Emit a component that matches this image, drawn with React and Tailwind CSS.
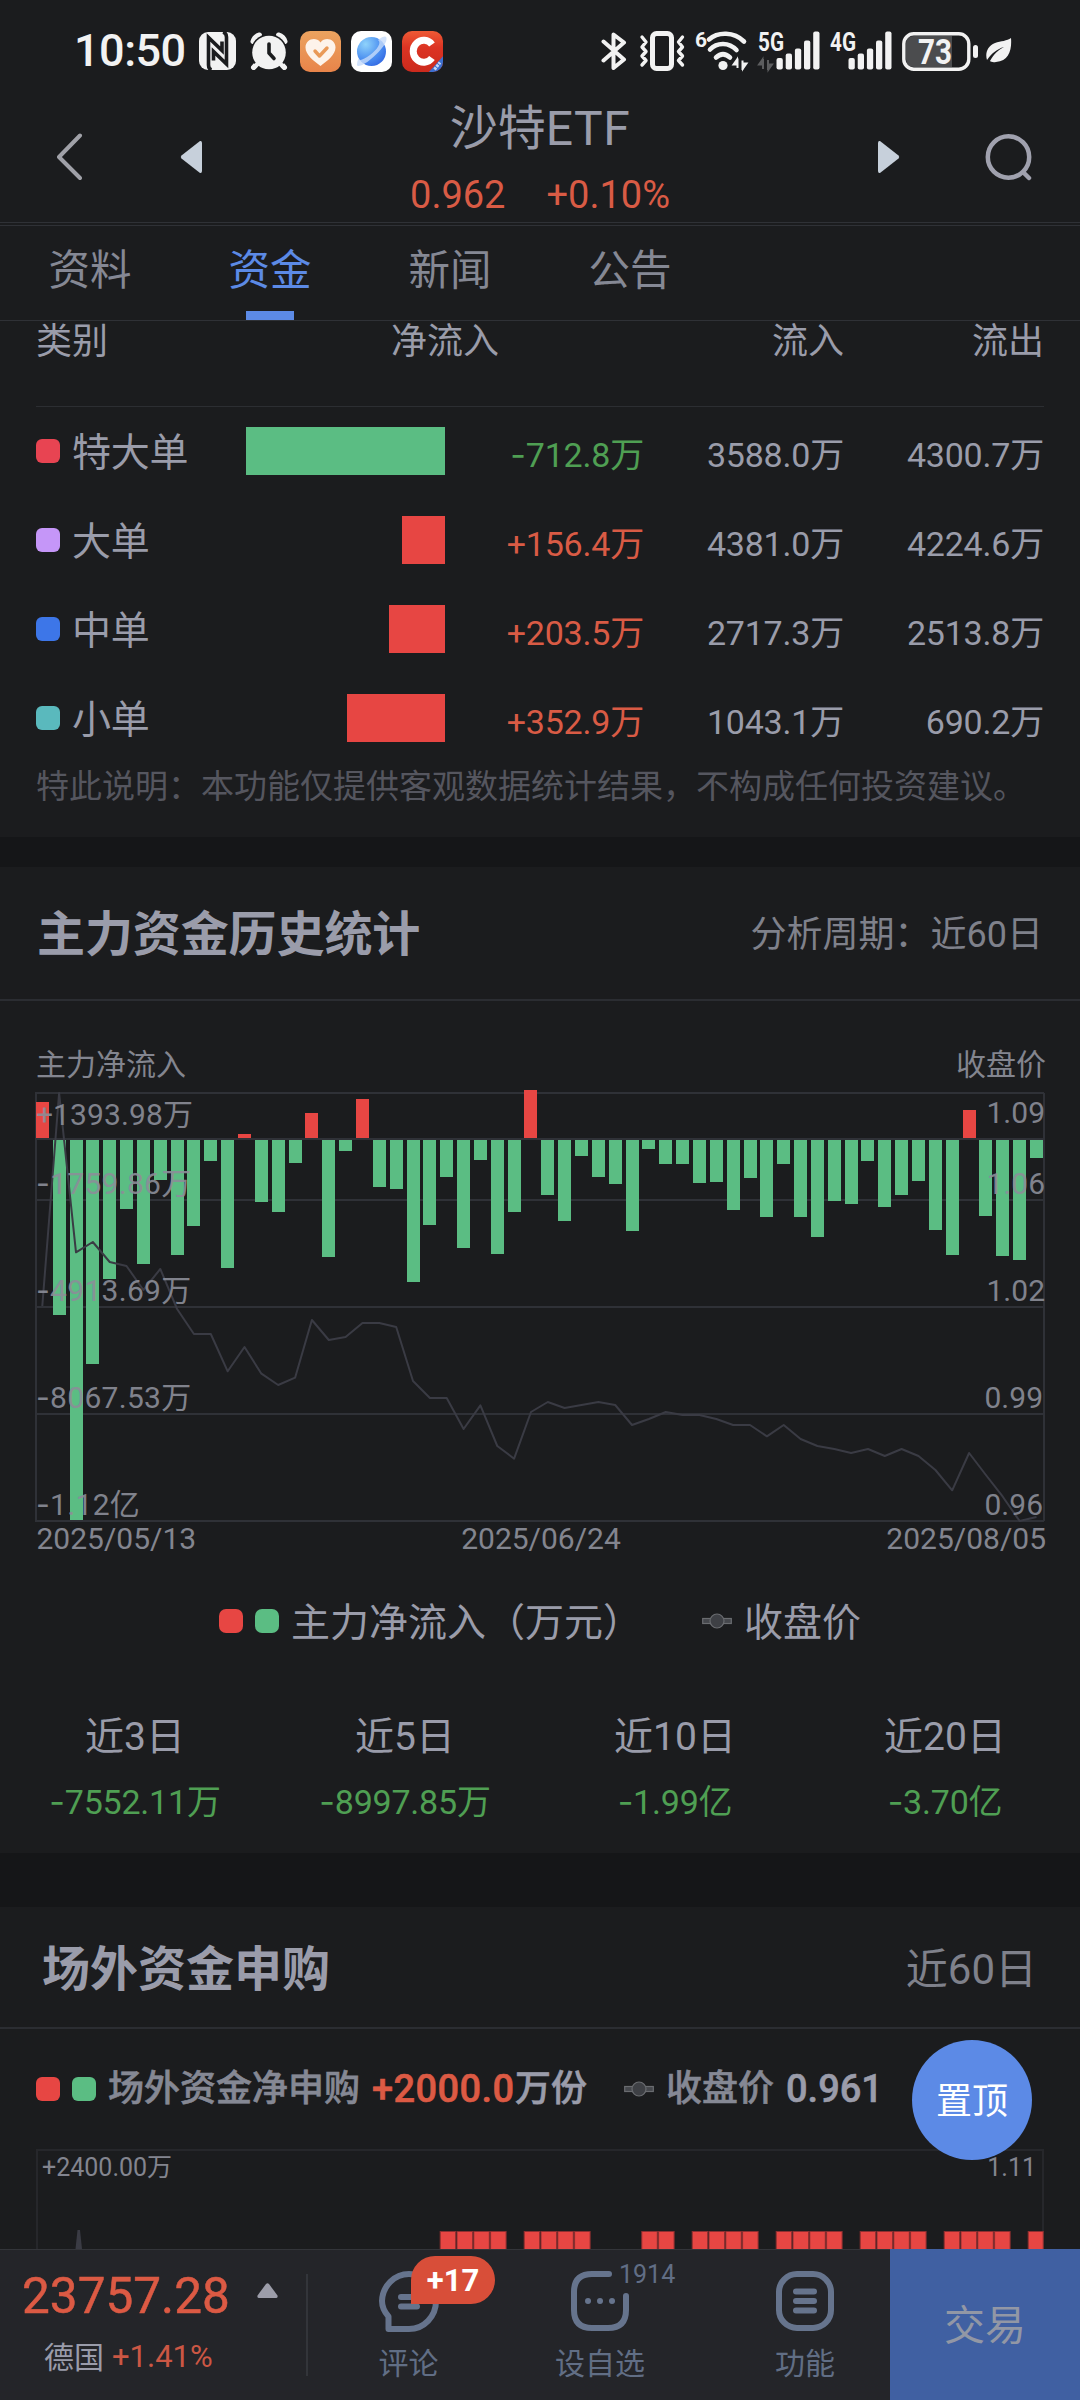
import React from "react";

const FLOWS = [
  { name: "特大单", dot: "bg-[#e84452]", bar: "bg-[#5bbd83] w-[199px]", tone: "text-[#4f9f53]", net: "-712.8万", inflow: "3588.0万", out: "4300.7万" },
  { name: "大单", dot: "bg-[#c596f8]", bar: "bg-[#e74643] w-[43px]", tone: "text-[#d95b45]", net: "+156.4万", inflow: "4381.0万", out: "4224.6万" },
  { name: "中单", dot: "bg-[#3d76e8]", bar: "bg-[#e74643] w-[56px]", tone: "text-[#d95b45]", net: "+203.5万", inflow: "2717.3万", out: "2513.8万" },
  { name: "小单", dot: "bg-[#5ab9bd]", bar: "bg-[#e74643] w-[98px]", tone: "text-[#d95b45]", net: "+352.9万", inflow: "1043.1万", out: "690.2万" },
];

const STATS = [
  ["近3日", "-7552.11万"],
  ["近5日", "-8997.85万"],
  ["近10日", "-1.99亿"],
  ["近20日", "-3.70亿"],
];

// Daily net inflow as bar lengths in pixels: positive rises above the zero line.
const BARS = [
  36, -175, -380, -224, -139, -69, -124, -40, -115, -86, -21, -128, 4, -62, -72, -23, 25, -117, -11, 39,
  -47, -49, -142, -85, -37, -108, -20, -114, -72, 48, -55, -81, -16, -37, -44, -91, -9, -24, -24, -43,
  -42, -70, -38, -77, -24, -77, -97, -61, -64, -21, -67, -55, -41, -90, -115, 28, -76, -116, -120, -18,
];

// Closing price, in thirds of a pixel below the chart's top.
const PRICE = [
  708, 69, 547, 516, 576, 588, 660, 597, 717, 792, 792, 904, 831, 911, 945, 923, 750, 810, 801, 759,
  759, 771, 933, 984, 984, 1077, 1006, 1128, 1166, 1026, 996, 1014, 1005, 996, 1005, 1065, 1047, 1026, 1035, 1035,
  1047, 1065, 1065, 1099, 1065, 1107, 1128, 1137, 1149, 1137, 1158, 1137, 1158, 1200, 1261, 1149, 1215, 1280, 1353, 1341,
];

const SUBS = [24, 25, 26, 27, 29, 30, 31, 32, 36, 37, 39, 40, 41, 42, 44, 45, 46, 47, 49, 50, 51, 52, 54, 55, 56, 57, 59];

// Negative amounts use a wider hyphen than the digits' own face has.
function Amount({ value }) {
  if (!value.startsWith("-")) return value;
  return (
    <>
      <span className="font-[Inter]">-</span>
      {value.slice(1)}
    </>
  );
}

function SignalBars({ label, dim }) {
  return (
    <svg width="63" height="40" viewBox="0 0 63 40" fill="#f2f2f2" className="shrink-0 overflow-visible">
      <text x="0" y="20" fontSize="25" fontWeight="700" textLength="26" lengthAdjust="spacingAndGlyphs">{label}</text>
      {dim && <path d="M5 28v10M4.500 28.500l-3.500 5h3.500zM10 39v-10M10.500 38.500l3.500-5h-3.500z" stroke="#5c5d5f" strokeWidth="2" fill="#5c5d5f" />}
      <rect x="18.500" y="27" width="6.300" height="11.500" rx="2" />
      <rect x="27.700" y="22.500" width="6.300" height="16" rx="2" />
      <rect x="36.900" y="17.500" width="6.300" height="21" rx="2" />
      <rect x="46" y="9.500" width="6.300" height="29" rx="2" />
      <rect x="55.200" y="0.500" width="6.300" height="38" rx="2" />
    </svg>
  );
}

function StatusBar() {
  return (
    <div className="flex h-[102px] shrink-0 items-center pl-[74px] pr-[68px] text-[#f2f2f2]">
      <div className="w-[125px] whitespace-nowrap text-[45px] font-medium leading-[60px] tracking-[-0.5px]">10:50</div>
      <svg width="37" height="38" viewBox="0 0 37 38" className="shrink-0">
        <rect width="37" height="38" rx="9" fill="#f2f2f2" />
        <path d="M12.500 38Q9.500 37 9.500 33V5.500L23 18.500V9.500M24 0Q27.500 1 27.500 5v27L14.500 19.500V28.500" fill="none" stroke="#1b1c1e" strokeWidth="3.600" />
      </svg>
      <svg width="38" height="38" viewBox="0 0 38 38" className="ml-[14px] shrink-0">
        <g fill="none" stroke="#f2f2f2" strokeLinecap="round">
          <path d="M3 9.500Q4.500 4.500 9.500 3M35 9.500Q33.500 4.500 28.500 3" strokeWidth="5" />
          <path d="M7.500 31l-4 4.500M30.500 31l4 4.500" strokeWidth="5" />
        </g>
        <circle cx="19" cy="20.500" r="18.500" fill="#1b1c1e" />
        <path d="M7.500 32l-3.500 3.500M30.500 32l3.500 3.500" stroke="#f2f2f2" strokeWidth="4.500" strokeLinecap="round" />
        <circle cx="19" cy="20.500" r="16.800" fill="#f2f2f2" />
        <path d="M19 12v9l5 5.500" fill="none" stroke="#1b1c1e" strokeWidth="3.600" strokeLinecap="round" strokeLinejoin="round" />
      </svg>
      <svg width="41" height="41" viewBox="0 0 41 41" className="ml-[12px] shrink-0">
        <defs>
          <linearGradient id="heart" x1="0" y1="0" x2="0" y2="1"><stop stopColor="#eba35f" /><stop offset="1" stopColor="#e8844a" /></linearGradient>
        </defs>
        <rect width="41" height="41" rx="10" fill="url(#heart)" />
        <path d="M20.500 35C14 30 5.500 24 5.500 16.500c0-8 10-11.500 15-5 5-6.500 15-3 15 5C35.500 24 27 30 20.500 35z" fill="#fdf3ea" />
        <path d="M15 20l4.500 5 7.500-8" fill="none" stroke="#e99a58" strokeWidth="3.400" strokeLinecap="round" strokeLinejoin="round" />
      </svg>
      <svg width="41" height="41" viewBox="0 0 41 41" className="ml-[10px] shrink-0">
        <defs>
          <radialGradient id="globe" cx="0.3" cy="0.25" r="0.9"><stop stopColor="#8fd3fb" /><stop offset="0.6" stopColor="#4a8df0" /><stop offset="1" stopColor="#2f62e0" /></radialGradient>
        </defs>
        <rect width="41" height="41" rx="10" fill="#fff" />
        <circle cx="20.500" cy="20.500" r="14.500" fill="url(#globe)" />
        <path d="M27 9c6-4.500 9-4.500 8.500-.5C35 14 27 22 20 28 13 34 6 37 6 33.500c0-2 .5-4 1.500-6 .5 3 5.500 1 11.500-3.500C26 18.500 31 12 27 9z" fill="#c5dbfa" opacity="0.8" />
      </svg>
      <svg width="41" height="41" viewBox="0 0 41 41" className="ml-[10px] shrink-0">
        <defs>
          <clipPath id="tile"><rect width="41" height="41" rx="10" /></clipPath>
          <linearGradient id="red" x1="0" y1="0" x2="0" y2="1"><stop stopColor="#ee5a35" /><stop offset="0.4" stopColor="#dc3423" /><stop offset="1" stopColor="#cc2a1d" /></linearGradient>
        </defs>
        <g clipPath="url(#tile)">
          <rect width="41" height="41" fill="url(#red)" />
          <path d="M30 13.500A10.500 11 0 1 0 30 27" fill="none" stroke="#fff" strokeWidth="7" />
          <path d="M26 42L42 24v18z" fill="#3b6fd0" />
          <path d="M32.500 38.500l5.500-7" stroke="#c9d8f5" strokeWidth="3" strokeDasharray="2.500 1" />
        </g>
      </svg>
      <div className="flex-1" />
      <svg width="26" height="38" viewBox="0 0 26 38" className="shrink-0">
        <path d="M2.500 9.500L23 27.500 12.500 36V2.500L23 10.500 2.500 28.500" fill="none" stroke="#f2f2f2" strokeWidth="4" strokeLinecap="round" strokeLinejoin="round" />
      </svg>
      <svg width="47" height="40" viewBox="0 0 47 40" className="ml-[12px] shrink-0" fill="none" stroke="#f2f2f2">
        <rect x="13.500" y="2.500" width="19" height="35" rx="4" strokeWidth="5" />
        <path d="M3 6l4 5-4 5 4 4.500-4 4.500 4 4.500-4 4.500M43.500 6l-4 5 4 5-4 4.500 4 4.500-4 4.500 4 4.500" strokeWidth="3.400" strokeLinejoin="round" strokeLinecap="round" />
      </svg>
      <svg width="52" height="42" viewBox="0 0 52 42" className="ml-[10px] shrink-0 overflow-visible">
        <text x="-1" y="17" fontSize="21" fontWeight="700" fill="#f2f2f2">6</text>
        <g fill="none" stroke="#f2f2f2" strokeWidth="4.600" strokeLinecap="round">
          <path d="M13 9.500C22 1.500 38 1.500 48 11.500" />
          <path d="M14 19.500C21 12 33 12 40.500 20" />
          <path d="M20 27.500Q27 21 34 27.500" />
        </g>
        <circle cx="27" cy="35.500" r="4.600" fill="#f2f2f2" />
        <path d="M41.500 28.500v9.500M41 29.500l-3.500 5h3.500zM46.500 40v-9.500M47 38.500l3.500-5h-3.500z" stroke="#f2f2f2" strokeWidth="2" fill="#f2f2f2" />
      </svg>
      <div className="ml-[10px] flex items-center gap-[9px]">
        <SignalBars label="5G" dim />
        <SignalBars label="4G" />
      </div>
      <svg width="77" height="39" viewBox="0 0 77 39" className="ml-[9px] shrink-0 overflow-visible">
        <path d="M12 4h38v31H12q-8 0-8-8V12q0-8 8-8z" fill="#4b4c4e" />
        <rect x="1.800" y="1.800" width="65" height="35.400" rx="10" fill="none" stroke="#f2f2f2" strokeWidth="3.400" />
        <rect x="71" y="13" width="5" height="13" rx="2.500" fill="#f2f2f2" />
        <text x="33" y="31.500" fontSize="35" fontWeight="700" textAnchor="middle" fill="#f2f2f2" textLength="34" lengthAdjust="spacingAndGlyphs">73</text>
      </svg>
      <svg width="26" height="26" viewBox="0 0 26 26" className="ml-[7px] shrink-0">
        <path d="M25 0C26 12 23 23 10 24 7 24.500 5 24 4 23 8 16 12 12 18 9 11 11 6 15 1 22-1 16 1 8 9 5 15 3 21 3 25 0z" fill="#f2f2f2" />
      </svg>
    </div>
  );
}

function Header() {
  return (
    <div className="flex h-[120px] shrink-0 items-center justify-between pb-[10px] pl-[56px] pr-[47px]">
      <div className="flex items-center gap-[96px]">
        <svg width="28" height="48" viewBox="0 0 28 48">
          <path d="M24 2.500L3 24l21 21" fill="none" stroke="#a0a1a8" strokeWidth="4" strokeLinecap="round" strokeLinejoin="round" />
        </svg>
        <svg width="22" height="34" viewBox="0 0 22 34"><path d="M20 1L1.500 15.500q-1.500 1.500 0 3L20 33q2 .5 2-2V3q0-2.500-2-2z" fill="#c7d0db" /></svg>
      </div>
      <div className="h-[110px] w-[280px] text-center">
        <div className="h-[74px] whitespace-nowrap pt-[3px] text-[48px] leading-[48px] text-[#9a9caa]">沙特<span className="tracking-[0.6px]">ETF</span></div>
        <div className="flex justify-center gap-[41px] whitespace-nowrap text-[38px] leading-[38px] text-[#d95b45]">
          <span>0.962</span>
          <span>+0.10%</span>
        </div>
      </div>
      <div className="flex items-center gap-[85px]">
        <svg width="22" height="34" viewBox="0 0 22 34"><path d="M2 1l18.500 14.500q1.500 1.500 0 3L2 33q-2 .5-2-2V3Q0 .5 2 1z" fill="#c7d0db" /></svg>
        <svg width="48" height="48" viewBox="0 0 48 48" fill="none" stroke="#a0a1ae" strokeWidth="4.500" strokeLinecap="round">
          <circle cx="23.500" cy="24" r="20.700" />
          <path d="M38.500 39.500l5.500 5.500" />
        </svg>
      </div>
    </div>
  );
}

function Tabs() {
  return (
    <div className="mt-[2px] flex h-[96px] shrink-0 border-y border-[#2f3136] text-[41.500px] leading-[48px] text-[#858894]">
      <div className="w-[180px] pt-[21px] text-center">资料</div>
      <div className="flex w-[180px] flex-col items-center justify-between pt-[21px] text-[#5c8ae6]">
        资金
        <span className="h-[9px] w-[48px] bg-[#5c8ae6]" />
      </div>
      <div className="w-[180px] pt-[21px] text-center">新闻</div>
      <div className="w-[180px] pt-[21px] text-center">公告</div>
    </div>
  );
}

function FlowTable() {
  return (
    <div className="h-[516px] shrink-0 px-[36px] text-[#9a9caa]">
      <div className="flex h-[86px] border-b border-[#2c2e32] pt-[3px] text-[36px] leading-[36px]">
        <span className="w-[355px]">类别</span>
        <span className="w-[110px] whitespace-nowrap">净流入</span>
        <span className="w-[343px] text-right">流入</span>
        <span className="w-[200px] text-right">流出</span>
      </div>
      {FLOWS.map((f) => (
        <div key={f.name} className="-mr-[2px] flex h-[89px] items-center whitespace-nowrap pb-[1px] text-[34px] tracking-[-0.200px]">
          <span className={"h-[24px] w-[24px] shrink-0 rounded-[6px] " + f.dot} />
          <span className="w-[150px] shrink-0 pl-[12px] pt-[3px] text-[39px] leading-[40px]">{f.name}</span>
          <div className="flex w-[235px] shrink-0 justify-end">
            <span className={"h-[48px] " + f.bar} />
          </div>
          <span className={"w-[199px] pt-[8px] text-right leading-[40px] " + f.tone}><Amount value={f.net} /></span>
          <span className="w-[200px] pt-[8px] text-right leading-[40px]">{f.inflow}</span>
          <span className="w-[200px] pt-[8px] text-right leading-[40px]">{f.out}</span>
        </div>
      ))}
      <div className="pt-[5px] whitespace-nowrap text-[33px] leading-[38px] text-[#55565f]">
        特此说明：本功能仅提供客观数据统计结果，不构成任何投资建议。
      </div>
    </div>
  );
}

function LineMark() {
  return (
    <svg width="30" height="16" viewBox="0 0 30 16" className="shrink-0">
      <rect x="0.700" y="5.500" width="28.600" height="5" fill="#45474c" stroke="#6a6c70" strokeWidth="1.200" />
      <circle cx="15" cy="8" r="7" fill="#3e4045" stroke="#6a6c70" strokeWidth="1.200" />
    </svg>
  );
}

function Tick({ value }) {
  if (!value.startsWith("-")) return value;
  return (
    <>
      <tspan fontFamily="Inter">-</tspan>
      {value.slice(1)}
    </>
  );
}

function HistoryChart() {
  const left = ["+1393.98万", "-1759.86万", "-4913.69万", "-8067.53万", "-1.12亿"];
  const right = ["1.09", "1.06", "1.02", "0.99", "0.96"];
  const base = [55, 124, 231, 338, 445];
  const points = PRICE.map((y, i) => `${(42.3 + 16.85 * i).toFixed(1)},${(y / 3).toFixed(1)}`).join(" ");
  return (
    <svg width="1080" height="486" viewBox="0 16 1080 486" className="shrink-0 text-[30px]">
      <g stroke="#2f3137" strokeWidth="2" fill="none">
        <path d="M35 23H1044M35 69H1044M35 130H1044M35 237H1044M35 344H1044M35 451H1044M36 23V451M1044 23V451" />
      </g>
      {BARS.map((v, i) => (
        <rect key={i} x={Math.round(35.8 + 16.85 * i)} y={v > 0 ? 68 - v : 70} width="13" height={Math.abs(v)} fill={v > 0 ? "#e74643" : "#5bbd83"} />
      ))}
      <polyline points={points} fill="none" stroke="#3a3b44" strokeWidth="2" strokeLinejoin="round" />
      <g fill="#8b8e99" opacity="0.9">
        {left.map((t, i) => (
          <text key={t} x="36" y={base[i]} letterSpacing={i ? 0.3 : 0.1}><Tick value={t} /></text>
        ))}
        {right.map((t, i) => (
          <text key={t} x={i < 3 ? 1045 : 1043} y={base[i] - (i === 0 ? 2 : 0)} textAnchor="end">{t}</text>
        ))}
      </g>
      <g fill="#83858f">
        <text x="36.500" y="479">2025/05/13</text>
        <text x="541" y="479" textAnchor="middle">2025/06/24</text>
        <text x="1046" y="479" textAnchor="end">2025/08/05</text>
      </g>
    </svg>
  );
}

function History() {
  return (
    <>
      <div className="flex h-[134px] shrink-0 items-center justify-between border-b-2 border-[#2b2d32] px-[37px] pt-[4px]">
        <span className="text-[48px] font-bold leading-[60px] tracking-[-0.100px] text-[#9a9caa]">主力资金历史统计</span>
        <span className="text-[36px] leading-[60px] text-[#7f818b]">分析周期：近60日</span>
      </div>
      <div className="flex h-[85px] shrink-0 justify-between pl-[36px] pr-[34px] pt-[42px] text-[30px] leading-[44px] text-[#83858f]">
        <span>主力净流入</span>
        <span>收盘价</span>
      </div>
      <HistoryChart />
      <div className="flex h-[116px] shrink-0 items-center pl-[219px] text-[39px] leading-[60px] text-[#9a9caa] pb-[18px]">
        <span className="h-[24px] w-[24px] rounded-[7px] bg-[#e74643]" />
        <span className="ml-[12px] h-[24px] w-[24px] rounded-[7px] bg-[#5bbd83]" />
        <span className="ml-[12px] w-[411px] whitespace-nowrap pt-[4px]">主力净流入（万元）</span>
        <LineMark />
        <span className="ml-[12px] pt-[4px]">收盘价</span>
      </div>
      <div className="grid h-[165px] shrink-0 grid-cols-4 pt-[25px] text-center">
        {STATS.map(([k, v]) => (
          <div key={k}>
            <div className="text-[39px] leading-[48px] text-[#9a9caa]">{k}</div>
            <div className="pt-[17px] text-[34px] leading-[48px] tracking-[-0.200px] text-[#4f9f53]"><Amount value={v} /></div>
          </div>
        ))}
      </div>
    </>
  );
}

function Subscriptions() {
  return (
    <>
      <div className="flex h-[122px] shrink-0 items-center justify-between border-b-2 border-[#2b2d32] pl-[42px] pr-[43px] pt-[5px]">
        <span className="text-[48px] font-bold leading-[60px] text-[#9a9caa]">场外资金申购</span>
        <span className="text-[42px] leading-[60px] text-[#7f818b]">近60日</span>
      </div>
      <div className="flex h-[120px] shrink-0 items-center whitespace-nowrap pl-[36px] text-[36px] font-medium leading-[60px] text-[#9a9caa] [-webkit-text-stroke:0.600px]">
        <span className="h-[24px] w-[24px] rounded-[6px] bg-[#e74643]" />
        <span className="ml-[12px] h-[24px] w-[24px] rounded-[6px] bg-[#5bbd83]" />
        <span className="ml-[12px] w-[264px] text-[#858894]">场外资金净申购</span>
        <span className="w-[143px] text-[38px] tracking-[0.400px] text-[#dc5a44]">+2000.0</span>
        <span className="w-[109px]">万份</span>
        <LineMark />
        <span className="ml-[12px] w-[120px] text-[#858894]">收盘价</span>
        <span className="text-[38px]">0.961</span>
      </div>
      <svg width="1080" height="100" viewBox="0 2149 1080 100" className="shrink-0 text-[25px]">
        <path d="M37 2249V2150H1043V2249" fill="none" stroke="#26272b" strokeWidth="2" />
        <path d="M75.500 2249L77.500 2230H80L82 2249z" fill="#3a3b44" />
        {SUBS.map((i) => (
          <rect key={i} x={37 + 16.8 * i} y="2231.500" width={i === 59 ? 15 : 15.5} height="20" fill="#e74643" stroke="#8e2f30" strokeWidth="1" />
        ))}
        <g fill="#83858f">
          <text x="42" y="2175.500">+2400.00万</text>
          <text x="1036" y="2175.500" textAnchor="end">1.11</text>
        </g>
      </svg>
    </>
  );
}

function BottomBar() {
  return (
    <div className="flex h-[151px] shrink-0 bg-[#242529] text-[30px] text-[#616e85]">
      <div className="flex w-[890px] border-t border-[#33353a]">
        <div className="w-[306px] shrink-0">
          <div className="flex h-[72px] items-center pl-[22px] pt-[19px]">
            <span className="w-[235px] text-[49.500px] leading-[56px] text-[#dc5a44] [-webkit-text-stroke:0.500px]">23757.28</span>
            <svg width="21" height="15" viewBox="0 0 21 15" className="-mt-[11px]"><path d="M9 1q1.500-1.500 3 0l8.500 11.500Q21 15 19 15H2Q0 15 .5 12.500z" fill="#9c9da9" /></svg>
          </div>
          <div className="flex h-[60px] items-center gap-[8px] pl-[44px] pt-[10px] text-[#9a9caa]">
            <span>德国</span>
            <span className="text-[31px] text-[#cb5744]">+1.41%</span>
          </div>
        </div>
        <div className="mt-[24px] h-[102px] w-[2px] shrink-0 bg-[#33353a]" />
        <div className="relative flex w-[201px] shrink-0 flex-col items-center pt-[20px]">
          <svg width="62" height="62" viewBox="0 0 62 62" fill="none" stroke="#66748d" strokeWidth="6" strokeLinecap="round" strokeLinejoin="round">
            <path d="M31 4A27 28 0 0 0 4 31c0 6 2.500 11 6.500 15.500V59H31A27 28 0 0 0 58 31 27 28 0 0 0 31 4z" />
            <path d="M23 27h16M23 36.500h16" />
          </svg>
          <div className="absolute left-[103px] top-[6px] h-[48px] w-[84px] rounded-[24px] rounded-bl-none bg-[#d84e39] text-center text-[31px] font-bold leading-[49px] text-white">+17</div>
          <span className="mt-[10px] leading-[44px]">评论</span>
        </div>
        <div className="relative flex w-[182px] shrink-0 flex-col items-center pt-[20px]">
          <svg width="60" height="62" viewBox="0 0 60 62" fill="none" stroke="#66748d" strokeWidth="6" strokeLinecap="round">
            <path d="M39 4H22Q4 4 4 22V40Q4 58 22 58H38Q56 58 56 40V26" />
            <path d="M18 31h.01M30 31h.01M42 31h.01" />
          </svg>
          <span className="absolute left-[110px] top-[1px] text-[25px] leading-[48px]">1914</span>
          <span className="mt-[10px] leading-[44px]">设自选</span>
        </div>
        <div className="ml-[29px] flex w-[170px] shrink-0 flex-col items-center pt-[20px]">
          <svg width="60" height="62" viewBox="0 0 60 62" fill="none" stroke="#66748d" strokeWidth="6" strokeLinecap="round">
            <rect x="4" y="4" width="52" height="54" rx="18" />
            <path d="M21 21.500h18M21 31h18M21 40.500h18" />
          </svg>
          <span className="mt-[10px] leading-[44px]">功能</span>
        </div>
      </div>
      <div className="flex flex-1 items-center justify-center bg-[#4060a2] pt-[4px] text-[41px] text-[#9297a5]">交易</div>
    </div>
  );
}

export default function App() {
  return (
    <div className="relative flex h-[2400px] w-[1080px] flex-col overflow-hidden bg-[#1b1c1e] font-[Roboto,'Noto_Sans_CJK_SC',sans-serif]">
      <StatusBar />
      <Header />
      <div className="h-px shrink-0 bg-[#2f3136]" />
      <Tabs />
      <FlowTable />
      <div className="h-[30px] shrink-0 bg-[#151618]" />
      <History />
      <div className="h-[54px] shrink-0 bg-[#151618]" />
      <Subscriptions />
      <BottomBar />
      <div className="absolute left-[912px] top-[2040px] flex h-[120px] w-[120px] items-center justify-center rounded-full bg-[#5c8ae6] pt-[3px] text-[36px] text-white">
        置顶
      </div>
    </div>
  );
}
